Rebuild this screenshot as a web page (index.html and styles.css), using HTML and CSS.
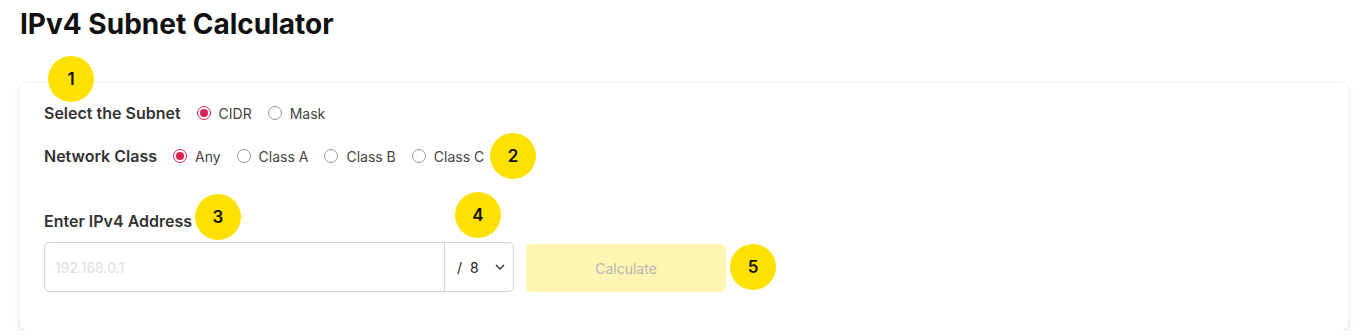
FILE: index.html
```
<!DOCTYPE html>
<html lang="en">
<head>
    <meta charset="UTF-8">
    <meta name="viewport" content="width=device-width, initial-scale=1.0">
    <title>IPv4 Subnet Calculator</title>
    <link rel="stylesheet" href="styles.css">
</head>
<body>
    <h1 class="page-title">IPv4 Subnet Calculator</h1>

    <!-- Calculator Card -->
    <div class="card">
        <div class="option-row">
            <span class="option-label">Select the Subnet</span>
            <label class="radio"><span class="radio-dot checked"></span>CIDR</label>
            <label class="radio"><span class="radio-dot"></span>Mask</label>
        </div>

        <div class="option-row">
            <span class="option-label">Network Class</span>
            <label class="radio"><span class="radio-dot checked"></span>Any</label>
            <label class="radio"><span class="radio-dot"></span>Class A</label>
            <label class="radio"><span class="radio-dot"></span>Class B</label>
            <label class="radio"><span class="radio-dot"></span>Class C</label>
        </div>

        <div class="address-label">Enter IPv4 Address</div>

        <div class="address-row">
            <div class="input-group">
                <div class="ip-input">192.168.0.1</div>
                <div class="cidr-select">
                    <span>/&nbsp;&nbsp;8</span>
                    <svg width="10" height="6" viewBox="0 0 10 6"><path d="M1 1l4 4 4-4" fill="none" stroke="#333" stroke-width="1.4"/></svg>
                </div>
            </div>
            <button class="calc-btn">Calculate</button>
        </div>

        <!-- Step badges -->
        <span class="badge badge-1">1</span>
        <span class="badge badge-2">2</span>
        <span class="badge badge-3">3</span>
        <span class="badge badge-4">4</span>
        <span class="badge badge-5">5</span>
    </div>
</body>
</html>
```
FILE: styles.css
```
/* Basic page styles */
body {
    font-family: Inter, "Noto Sans", sans-serif;
    margin: 0;
    padding: 0 20px;
    background-color: #fff;
    color: #333;
}
.page-title {
    font-size: 28px;
    font-weight: 700;
    color: #111;
    margin: 0;
    padding-top: 6px;
    height: 83px;
    box-sizing: border-box;
    line-height: 36px;
}
/* Card */
.card {
    position: relative;
    background-color: #fff;
    border-radius: 8px;
    box-shadow: 0 2px 6px rgba(0, 0, 0, 0.14);
    padding: 20px 24px 39px;
    box-sizing: border-box;
    height: 248px;
}
.option-row {
    display: flex;
    align-items: center;
    height: 20px;
    margin-bottom: 23px;
}
.option-label {
    font-size: 16px;
    font-weight: 600;
    color: #333;
    margin-right: 16px;
}
.radio {
    display: flex;
    align-items: center;
    font-size: 14px;
    color: #444;
    margin-right: 16px;
}
.radio-dot {
    width: 12px;
    height: 12px;
    border: 1px solid #999;
    border-radius: 50%;
    margin-right: 8px;
    box-sizing: content-box;
    position: relative;
}
.radio-dot.checked {
    border-color: #d6244f;
}
.radio-dot.checked::after {
    content: "";
    position: absolute;
    top: 2px;
    left: 2px;
    width: 8px;
    height: 8px;
    border-radius: 50%;
    background-color: #d6244f;
}
.address-label {
    font-size: 16px;
    font-weight: 600;
    color: #333;
    margin-top: 45px;
    height: 20px;
    margin-bottom: 11px;
}
.address-row {
    display: flex;
    align-items: center;
}
.input-group {
    display: flex;
    width: 470px;
    height: 50px;
    border: 1px solid #d4d4d4;
    border-radius: 5px;
    box-sizing: border-box;
}
.ip-input {
    flex: 1;
    display: flex;
    align-items: center;
    padding-left: 10px;
    font-size: 14px;
    color: #ddd;
    border-right: 1px solid #d4d4d4;
}
.cidr-select {
    width: 68px;
    display: flex;
    align-items: center;
    justify-content: space-between;
    padding: 0 8px 0 12px;
    box-sizing: border-box;
    font-size: 14px;
    color: #222;
}
.calc-btn {
    margin-left: 12px;
    width: 200px;
    height: 48px;
    background-color: #fff5b3;
    border: none;
    border-radius: 5px;
    font-family: inherit;
    font-size: 14px;
    color: #b5b5b5;
    margin-top: 2px;
}
/* Step badges */
.badge {
    position: absolute;
    width: 46px;
    height: 46px;
    border-radius: 50%;
    background-color: #ffe100;
    color: #111;
    font-size: 17px;
    font-weight: 600;
    display: flex;
    align-items: center;
    justify-content: center;
}
.badge-1 { left: 28px; top: -27px; }
.badge-2 { left: 470px; top: 50px; }
.badge-3 { left: 175px; top: 111px; }
.badge-4 { left: 435px; top: 109px; }
.badge-5 { left: 710px; top: 161px; }
```
